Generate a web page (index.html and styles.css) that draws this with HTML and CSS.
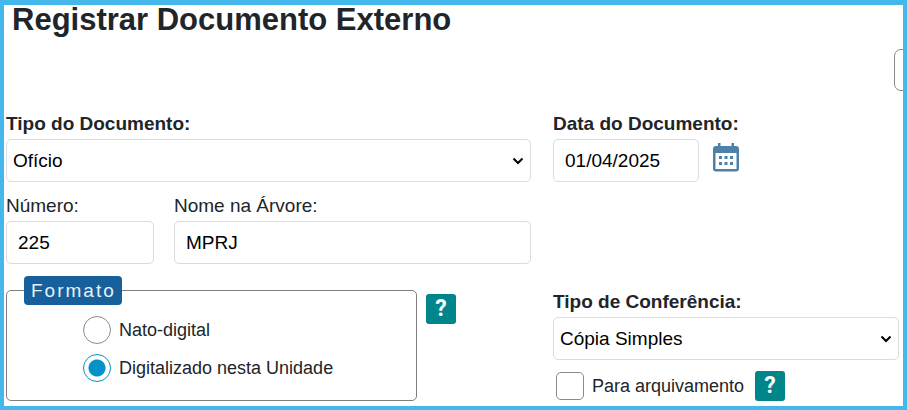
FILE: index.html
```html
<!DOCTYPE html>
<html lang="pt-BR">
<head>
    <meta charset="UTF-8">
    <meta name="viewport" content="width=device-width, initial-scale=1.0">
    <title>Registrar Documento Externo</title>
    <link rel="stylesheet" href="styles.css">
</head>
<body>
    <main class="page">
        <h1>Registrar Documento Externo</h1>

        <div class="toolbar">
            <button type="button" class="toolbar-button" aria-label="Salvar"></button>
        </div>

        <form class="document-form">
            <div class="field">
                <label class="required" for="tipoDocumento">Tipo do Documento:</label>
                <div class="select-wrap">
                    <select id="tipoDocumento">
                        <option>Ofício</option>
                    </select>
                    <svg class="chevron" viewBox="0 0 12 8"><path d="M1.5 1.5 L6 6 L10.5 1.5"/></svg>
                </div>
            </div>

            <div class="field">
                <label class="required" for="dataDocumento">Data do Documento:</label>
                <div class="date-row">
                    <input type="text" id="dataDocumento" value="01/04/2025">
                    <button type="button" class="calendar-button" aria-label="Selecionar data">
                        <svg viewBox="0 0 26 29">
                            <path fill-rule="evenodd" d="M5 0h2.5v3h11V0H21v3h2a3 3 0 0 1 3 3v19.5a3 3 0 0 1-3 3H3a3 3 0 0 1-3-3V6a3 3 0 0 1 3-3h2zM2.5 10v16h21V10z"/>
                            <path d="M6 13h3v3H6zM11.5 13h3v3h-3zM17 13h3v3h-3zM6 19h3v3H6zM11.5 19h3v3h-3zM17 19h3v3h-3z"/>
                        </svg>
                    </button>
                </div>
            </div>

            <div class="name-row">
                <div class="field">
                    <label for="numero">Número:</label>
                    <input type="text" id="numero" value="225">
                </div>
                <div class="field">
                    <label for="nomeArvore">Nome na Árvore:</label>
                    <input type="text" id="nomeArvore" value="MPRJ">
                </div>
            </div>

            <div class="format-row">
                <fieldset>
                    <legend>Formato</legend>
                    <div class="option">
                        <input type="radio" name="formato" id="natoDigital">
                        <label for="natoDigital">Nato-digital</label>
                    </div>
                    <div class="option">
                        <input type="radio" name="formato" id="digitalizado" checked>
                        <label for="digitalizado">Digitalizado nesta Unidade</label>
                    </div>
                </fieldset>
                <button type="button" class="help">?</button>
            </div>

            <div class="conference">
                <div class="field">
                    <label class="required" for="tipoConferencia">Tipo de Conferência:</label>
                    <div class="select-wrap">
                        <select id="tipoConferencia">
                            <option>Cópia Simples</option>
                        </select>
                        <svg class="chevron" viewBox="0 0 12 8"><path d="M1.5 1.5 L6 6 L10.5 1.5"/></svg>
                    </div>
                </div>
                <div class="archive-row">
                    <div class="option">
                        <input type="checkbox" id="arquivamento">
                        <label for="arquivamento">Para arquivamento</label>
                    </div>
                    <button type="button" class="help">?</button>
                </div>
            </div>
        </form>
    </main>
</body>
</html>
```
FILE: styles.css
```css
* { box-sizing: border-box; }
body { margin: 0; font-family: "Liberation Sans", Arial, sans-serif; font-size: 19px; line-height: 24px; color: #212529; background-color: #fff; }
button, input, select { font-family: inherit; font-size: inherit; margin: 0; }
svg { display: block; }

.page { min-height: 100vh; border: 4px solid #44b8ea; border-top-width: 5px; overflow: hidden; padding: 0 4px 4px 2px; }
h1 { margin: 0 0 14px 6px; font-size: 31px; line-height: 30px; }

.toolbar { display: flex; justify-content: flex-end; margin-bottom: 21px; }
.toolbar-button { width: 80px; height: 42px; margin-right: -75px; border: 1px solid #888; border-radius: 7px; background-color: #fff; }

/* form grid */
.document-form { display: grid; grid-template-columns: 525fr 346fr; column-gap: 22px; row-gap: 12px; }
.name-row { grid-column: 1; display: grid; grid-template-columns: 148fr 357fr; column-gap: 20px; }
.format-row { grid-column: 1; display: flex; align-items: flex-start; gap: 9px; }
.conference { padding-top: 14px; }

.field { display: flex; flex-direction: column; gap: 3px; min-width: 0; }
.required { font-weight: bold; }

input[type="text"], select { width: 100%; height: 43px; border: 1px solid #d9dce1; border-radius: 5px; background-color: #fff; color: #000; }
input[type="text"] { padding: 0 11px; }
select { appearance: none; padding: 0 30px 0 6px; }
.select-wrap { position: relative; }
.chevron { position: absolute; right: 7px; top: 18px; width: 12px; height: 8px; fill: none; stroke: #000; stroke-width: 2; pointer-events: none; }

.date-row { display: flex; align-items: flex-start; gap: 14px; }
.date-row input[type="text"] { width: 146px; }
.calendar-button { padding: 4px 0 0; border: 0; background: none; }
.calendar-button svg { width: 26px; height: 29px; fill: #4f81a8; }

/* radios and checkbox */
fieldset { flex: 0 1 411px; min-width: 0; margin: 0; padding: 11px 0 18px 76px; border: 1px solid #808080; border-radius: 5px; }
legend { margin-left: -59px; padding: 0 6px 0 7px; height: 29px; line-height: 29px; border-radius: 4px; background-color: #17609c; color: #e8f0f7; letter-spacing: 2px; }
.option { display: flex; align-items: center; gap: 8px; font-size: 18px; }
.option + .option { margin-top: 10px; }
input[type="radio"], input[type="checkbox"] { appearance: none; flex: none; width: 28px; height: 28px; border: 1px solid #8a8a8a; background-color: #fff; }
input[type="radio"] { border-radius: 50%; }
input[type="radio"]:checked { border-color: #0492c8; background-image: radial-gradient(circle, #0492c8 8px, #fff 9px); }
input[type="checkbox"] { border-radius: 5px; }

.help { flex: none; width: 30px; height: 30px; padding: 0; border: 0; border-radius: 3px; background-color: #00858a; color: #fff; font-family: Roboto, sans-serif; font-size: 23px; font-weight: bold; line-height: 30px; }
.format-row .help { margin-top: 18px; }
.archive-row { display: flex; align-items: center; gap: 11px; margin-top: 11px; padding-left: 3px; }
```
